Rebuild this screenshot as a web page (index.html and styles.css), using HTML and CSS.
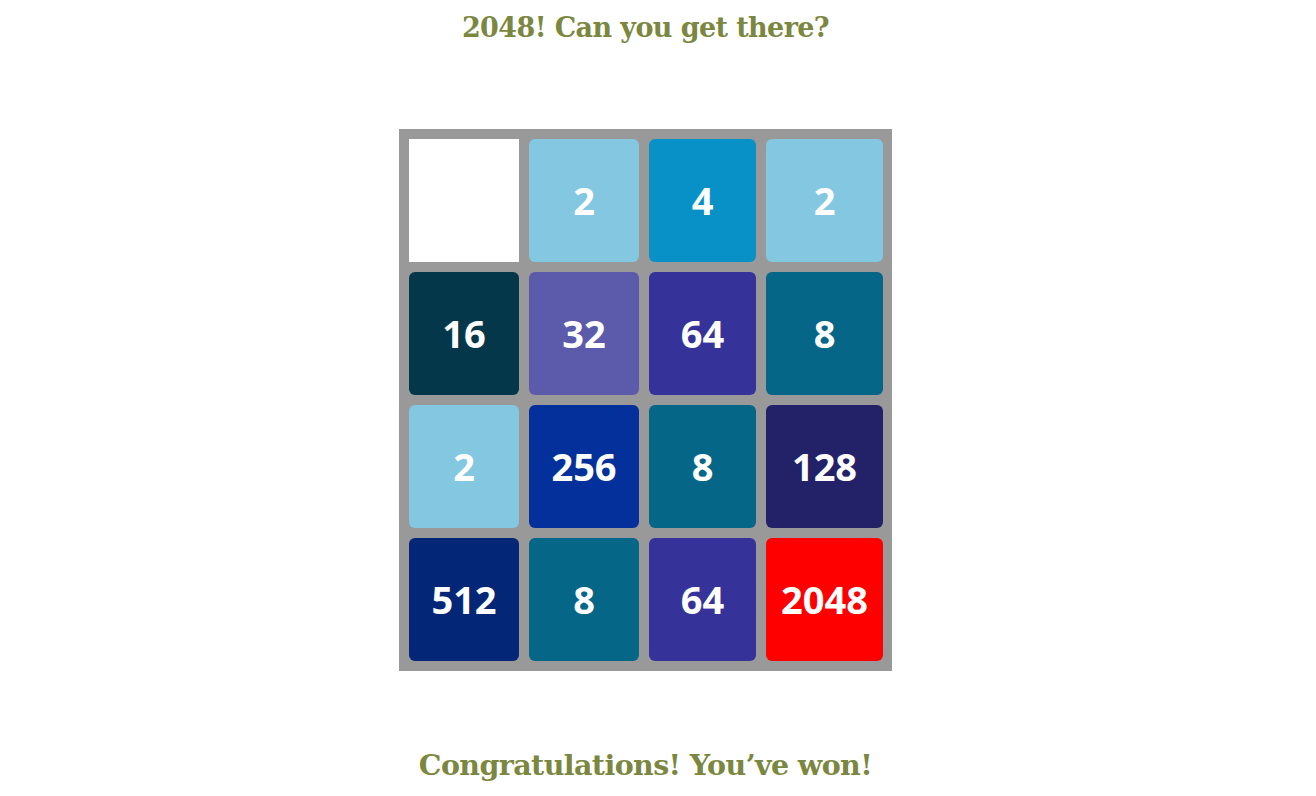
FILE: index.html
```html
<!DOCTYPE html>
<html>
<head>
<meta charset="utf-8">
<link rel="stylesheet" href="styles.css">
</head>
<body>
<div class="page">
  <h1 class="title">2048! Can you get there?</h1>
  <div class="board">
    <div class="tile t0"></div>
    <div class="tile t2">2</div>
    <div class="tile t4">4</div>
    <div class="tile t2">2</div>
    <div class="tile t16">16</div>
    <div class="tile t32">32</div>
    <div class="tile t64">64</div>
    <div class="tile t8">8</div>
    <div class="tile t2">2</div>
    <div class="tile t256">256</div>
    <div class="tile t8">8</div>
    <div class="tile t128">128</div>
    <div class="tile t512">512</div>
    <div class="tile t8">8</div>
    <div class="tile t64">64</div>
    <div class="tile t2048">2048</div>
  </div>
  <h2 class="won">Congratulations! You’ve won!</h2>
</div>
</body>
</html>
```

FILE: styles.css
```css
html, body {
  margin: 0;
  padding: 0;
  background: #ffffff;
}

.page {
  width: 1291px;
  display: flex;
  flex-direction: column;
  align-items: center;
}

.title,
.won {
  font-family: "DejaVu Serif", "Liberation Serif", serif;
  font-weight: bold;
  color: #7b8740;
  margin: 0;
  letter-spacing: -0.6px;
}

.title {
  font-size: 27px;
  line-height: 36px;
  margin-top: 10px;
}

.won {
  font-size: 28.5px;
  line-height: 40px;
  margin-top: 74px;
}

.board {
  margin-top: 83px;
  background: #999999;
  padding: 10px 9px 10px 10px;
  display: grid;
  grid-template-columns: 110px 110px 107px 117px;
  grid-auto-rows: 123px;
  gap: 10px;
}

.tile {
  border-radius: 6px;
  display: flex;
  align-items: center;
  justify-content: center;
  font-family: "Open Sans", "DejaVu Sans", sans-serif;
  font-weight: bold;
  font-size: 38px;
  color: #ffffff;
  padding-bottom: 2px;
}

.t0 { background: #ffffff; border-radius: 0; }
.t2 { background: #83c7e1; }
.t4 { background: #0891c7; }
.t8 { background: #056688; }
.t16 { background: #05374a; }
.t32 { background: #5b5aab; }
.t64 { background: #353399; }
.t128 { background: #232268; }
.t256 { background: #03309a; }
.t512 { background: #032677; }
.t2048 { background: #ff0000; }
```
